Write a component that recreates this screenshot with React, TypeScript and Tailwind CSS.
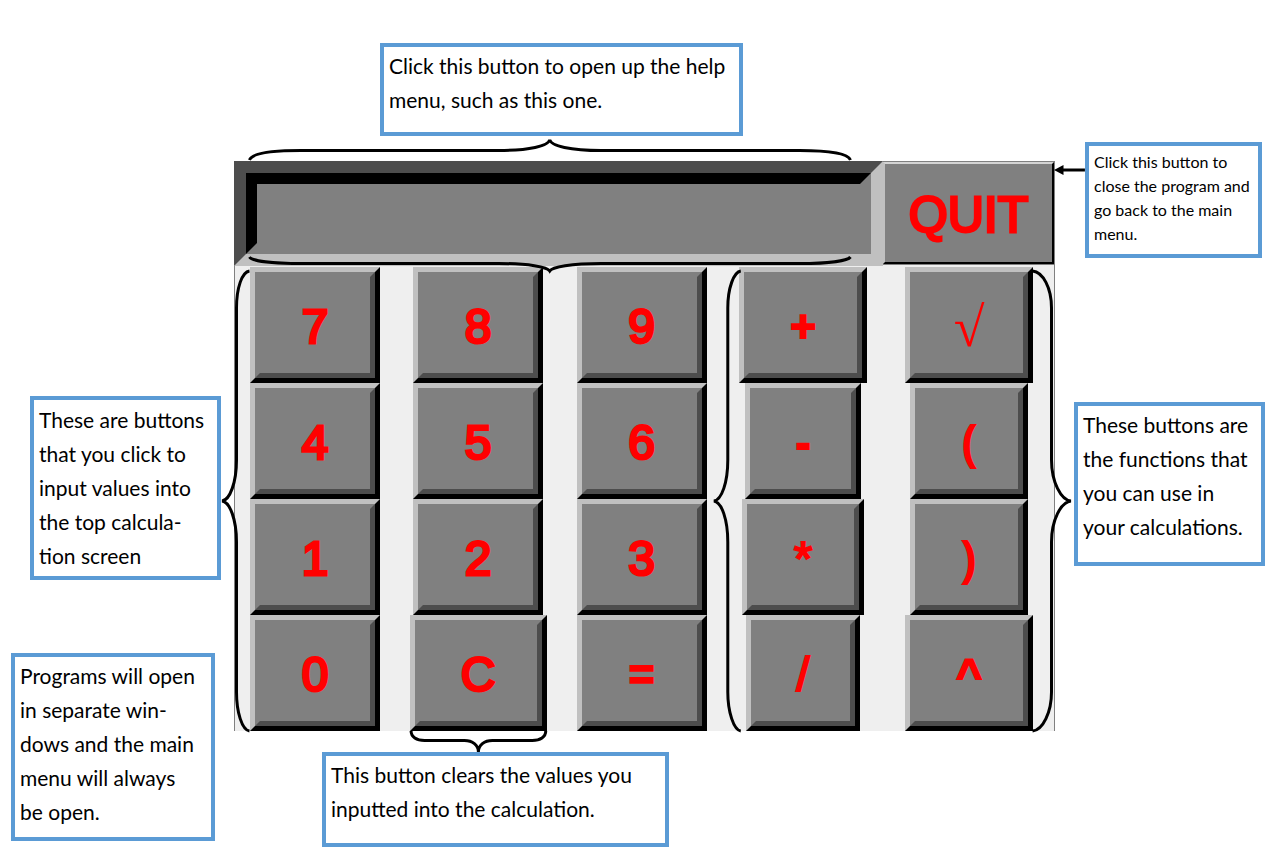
import { useState } from "react";
import type { ReactNode } from "react";

type Key = { label: string; width: string; face?: string };

const rounded = "text-5xl [-webkit-text-stroke:3px_#ff0000]";
const bold = "text-5xl font-bold";
const heavy = "text-[44px] font-bold [-webkit-text-stroke:2px_#ff0000]";
const light = "text-5xl [-webkit-text-stroke:2px_#ff0000]";
const serif = "text-[56px] font-['Liberation_Serif',serif]";

const keys: Key[] = [
  { label: "7", width: "w-[130px]" },
  { label: "8", width: "w-[130px]" },
  { label: "9", width: "w-[130px]" },
  { label: "+", width: "w-[128px]", face: heavy },
  { label: "√", width: "w-[128px]", face: serif },
  { label: "4", width: "w-[130px]" },
  { label: "5", width: "w-[130px]" },
  { label: "6", width: "w-[130px]" },
  { label: "-", width: "w-[116px]", face: heavy },
  { label: "(", width: "w-[118px]", face: bold },
  { label: "1", width: "w-[130px]" },
  { label: "2", width: "w-[130px]" },
  { label: "3", width: "w-[130px]" },
  { label: "*", width: "w-[122px]", face: light },
  { label: ")", width: "w-[118px]", face: bold },
  { label: "0", width: "w-[130px]" },
  { label: "C", width: "w-[137px]" },
  { label: "=", width: "w-[130px]", face: heavy },
  { label: "/", width: "w-[114px]", face: light },
  { label: "^", width: "w-[128px]", face: heavy },
];

function Callout({ className, children }: { className: string; children: ReactNode }) {
  return (
    <p className={`border-4 border-[#5b9bd5] bg-white pl-[5px] whitespace-nowrap text-black ${className}`}>
      {children}
    </p>
  );
}

function CalcKey({ label, width, face = rounded, onPress }: Key & { onPress: () => void }) {
  return (
    <button
      type="button"
      onClick={onPress}
      className={`h-[116px] border-[5px] border-t-[#c0c0c0] border-l-[#c0c0c0] border-r-black border-b-black bg-[#808080] ${width}`}
    >
      <span
        className={`flex h-full items-center justify-center border-[5px] border-t-[#808080] border-l-[#808080] border-r-[#4d4d4d] border-b-[#4d4d4d] pt-[3px] leading-none text-[#ff0000] ${face}`}
      >
        {label}
      </span>
    </button>
  );
}

function Braces() {
  return (
    <svg
      aria-hidden="true"
      viewBox="234 161 821 570"
      preserveAspectRatio="none"
      className="pointer-events-none absolute inset-0 h-full w-full overflow-visible"
      fill="none"
      stroke="#000"
      strokeWidth="3"
    >
      <path d="M248.500 160C251 153 272 150.500 300 150.500H498C528 150.500 549 146 549.500 139.500C550 146 571 150.500 601 150.500H800C828 150.500 848 153 851 160" />
      <path d="M248.500 257C251 261 272 263.500 300 263.500H498C528 263.500 547 267 549.500 271C552 267 571 263.500 601 263.500H800C828 263.500 848 261 851 257" />
      <path d="M248.500 271C241 272 235.500 288 235.500 308V460C235.500 482 229 500 221 501C229 502 235.500 520 235.500 542V692C235.500 712 241 730 248.500 731" />
      <path d="M741 271C734 272 728 288 728 308V460C728 482 722 500 714 501C722 502 728 520 728 542V692C728 712 734 730 741 731" />
      <path d="M1033.500 271C1044 272 1052.500 288 1052.500 308V460C1052.500 482 1062 500 1072 501C1062 502 1052.500 520 1052.500 542V692C1052.500 712 1044 730 1033.500 731" />
      <path d="M410.500 731C410.500 737 416 740.500 424 740.500H464C472 740.500 478 745 478 752C478 745 484 740.500 492 740.500H532C540 740.500 545.500 737 545.500 731" />
      <path d="M1062 170H1086" />
      <path d="M1055 170L1064.500 165V175Z" fill="#000" stroke="none" />
    </svg>
  );
}

export default function App() {
  const [entry, setEntry] = useState("");

  const press = (label: string) => setEntry((value) => (label === "C" ? "" : value + label));

  return (
    <main className="grid min-h-screen grid-cols-[234fr_821fr_222fr] bg-white font-[Lato,sans-serif] text-[21px] leading-[34px]">
      <aside className="flex flex-col items-end gap-[73px] pt-[396px]">
        <Callout className="mr-[13px] w-[191px] pt-[3px] pb-[3px]">
          These are buttons
          <br />
          that you click to
          <br />
          input values into
          <br />
          the top calcula-
          <br />
          tion screen
        </Callout>
        <Callout className="mr-[19px] w-[204px] pt-[2px] pb-[8px]">
          Programs will open
          <br />
          in separate win-
          <br />
          dows and the main
          <br />
          menu will always
          <br />
          be open.
        </Callout>
      </aside>

      <section className="flex flex-col pt-[43px]">
        <Callout className="ml-[146px] w-[363px] pt-[2px] pb-[15px]">
          Click this button to open up the help
          <br />
          menu, such as this one.
        </Callout>

        <div className="relative mt-[25px] border-x border-[#808080] bg-[#efefef] font-['Liberation_Sans',sans-serif]">
          <div className="-mx-px grid grid-cols-[162fr_164fr_163fr_160fr_172fr] justify-items-center">
            <div className="col-span-4 mb-px h-[105px] w-full border-[12px] border-t-[#4d4d4d] border-l-[#4d4d4d] border-r-[#c0c0c0] border-b-[#c0c0c0]">
              <input
                aria-label="Calculation"
                readOnly
                value={entry}
                className="h-full w-full border-[11px] border-t-black border-l-black border-r-[#808080] border-b-[#808080] bg-[#808080] px-2 text-4xl text-[#ff0000] outline-none"
              />
            </div>
            <div className="h-[104px] w-full border border-l-0 border-[#808080]">
              <button
                type="button"
                className="h-full w-full border-2 border-t-[#d4d4d4] border-l-[#c0c0c0] border-r-black border-b-black bg-[#808080] pt-[3px] text-[50px] leading-none text-[#ff0000] [-webkit-text-stroke:3px_#ff0000]"
              >
                QUIT
              </button>
            </div>
            {keys.map((key) => (
              <CalcKey key={key.label} {...key} onPress={() => press(key.label)} />
            ))}
          </div>
          <Braces />
        </div>

        <Callout className="mt-[21px] ml-[88px] w-[347px] pt-[2px] pb-[17px]">
          This button clears the values you
          <br />
          inputted into the calculation.
        </Callout>
      </section>

      <aside className="flex flex-col items-start gap-[144px] pt-[142px]">
        <Callout className="ml-[30px] w-[177px] pt-[4px] pb-[8px] text-base leading-6">
          Click this button to
          <br />
          close the program and
          <br />
          go back to the main
          <br />
          menu.
        </Callout>
        <Callout className="ml-[19px] w-[191px] pt-[2px] pb-[18px]">
          These buttons are
          <br />
          the functions that
          <br />
          you can use in
          <br />
          your calculations.
        </Callout>
      </aside>
    </main>
  );
}
